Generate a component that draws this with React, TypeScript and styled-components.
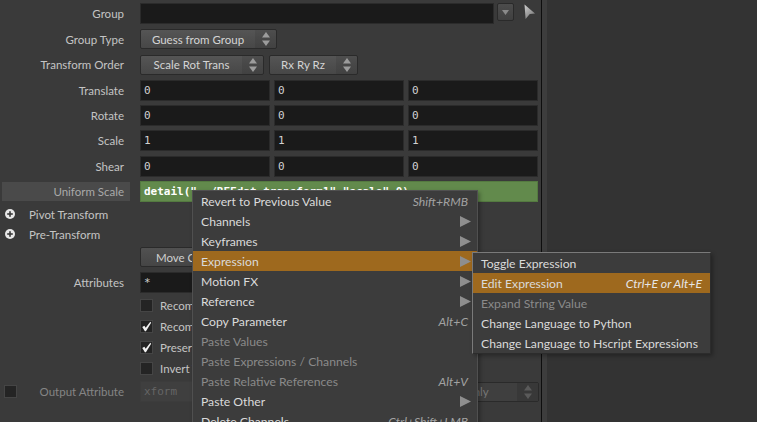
import React from 'react';
import styled, { createGlobalStyle, css } from 'styled-components';

const GlobalStyle = createGlobalStyle`
  html, body {
    margin: 0;
    padding: 0;
    background: #333333;
  }
  body {
    font-family: Lato, 'Noto Sans', sans-serif;
  }
`;

const Screen = styled.div`
  position: relative;
  width: 757px;
  height: 422px;
  overflow: hidden;
  display: flex;
  background: #333333;
`;

const Panel = styled.div`
  flex: none;
  width: 542px;
  box-sizing: border-box;
  padding: 1.3px 3px 0 0;
  background: #3a3a3a;
  border-right: 1px solid #0e0e0e;
  display: flex;
  flex-direction: column;
`;

const Strip = styled.div`
  flex: none;
  width: 5px;
  background: #3d3d3d;
`;

const Rest = styled.div`
  flex: 1;
  background: #333333;
`;

const Row = styled.div<{ $h?: number }>`
  display: grid;
  grid-template-columns: 130px 1fr;
  column-gap: 10px;
  align-items: center;
  height: ${(p) => p.$h ?? 25.4}px;
  flex: none;
`;

const Label = styled.div<{ $hot?: boolean; $off?: boolean }>`
  display: flex;
  align-items: center;
  justify-content: flex-end;
  padding-right: 6px;
  font-size: 11.5px;
  color: ${(p) => (p.$off ? '#858585' : '#c4c4c4')};
  white-space: nowrap;
  ${(p) =>
    p.$hot &&
    css`
      margin-left: 2px;
      height: 19px;
      background: #4a4a4a;
      color: #a9a9a9;
    `}
`;

const Field = styled.div<{ $off?: boolean }>`
  height: 21px;
  box-sizing: border-box;
  display: flex;
  align-items: center;
  padding-left: 3px;
  background: ${(p) => (p.$off ? '#3f3f3f' : '#1a1a1a')};
  border: 1px solid ${(p) => (p.$off ? '#3c3c3c' : '#2b2b2b')};
  font-family: 'DejaVu Sans Mono', monospace;
  font-size: 11px;
  color: ${(p) => (p.$off ? '#666666' : '#d2d2d2')};
  overflow: hidden;
  white-space: nowrap;
`;

const ExprField = styled(Field)`
  background: #628a4c;
  border-color: #547a40;
  color: #ffffff;
  font-weight: bold;
`;

const Vector = styled.div`
  display: grid;
  grid-template-columns: repeat(3, 1fr);
  gap: 4px;
`;

const Line = styled.div`
  display: flex;
  align-items: center;
  gap: 5px;
`;

const Menu = styled.div<{ $w: number; $off?: boolean }>`
  width: ${(p) => p.$w}px;
  height: 20px;
  box-sizing: border-box;
  display: flex;
  border: 1px solid #2a2a2a;
  border-radius: 2px;
  background: ${(p) => (p.$off ? '#3f3f3f' : 'linear-gradient(#555555, #474747)')};
  color: ${(p) => (p.$off ? '#777777' : '#d4d4d4')};
  font-size: 11.5px;
  overflow: hidden;
`;

const MenuText = styled.div`
  flex: 1;
  display: flex;
  align-items: center;
  justify-content: center;
  white-space: nowrap;
`;

const Spin = styled.div<{ $off?: boolean }>`
  width: 21px;
  display: flex;
  align-items: center;
  justify-content: center;
  background: ${(p) => (p.$off ? '#383838' : 'rgba(0,0,0,0.08)')};
`;

const DropBtn = styled.div`
  width: 17px;
  height: 18px;
  margin-left: 3px;
  margin-top: -3px;
  box-sizing: border-box;
  display: flex;
  align-items: center;
  justify-content: center;
  border: 1px solid #2a2a2a;
  border-radius: 2px;
  background: linear-gradient(#4c4c4c, #404040);
`;

const Button = styled.div<{ $w: number }>`
  width: ${(p) => p.$w}px;
  height: 20px;
  box-sizing: border-box;
  display: flex;
  align-items: center;
  justify-content: center;
  border: 1px solid #2a2a2a;
  border-radius: 2px;
  background: linear-gradient(#515151, #454545);
  color: #d0d0d0;
  font-size: 11.5px;
  white-space: nowrap;
`;

const Folder = styled.div`
  height: 20px;
  flex: none;
  display: flex;
  align-items: center;
  gap: 14px;
  padding-left: 5px;
  font-size: 11.5px;
  color: #c4c4c4;
`;

const Toggle = styled.div`
  height: 21px;
  flex: none;
  display: flex;
  align-items: center;
  gap: 7px;
  padding-left: 140px;
  font-size: 11.5px;
  color: #c4c4c4;
  white-space: nowrap;
`;

const Box = styled.div<{ $lead?: boolean }>`
  width: 13px;
  height: 13px;
  box-sizing: border-box;
  flex: none;
  display: flex;
  align-items: center;
  justify-content: center;
  background: #242424;
  border: 1px solid #454545;
  ${(p) =>
    p.$lead &&
    css`
      margin-left: 4px;
      margin-right: auto;
    `}
`;

const PopMenu = styled.div<{ $x: number; $y: number; $w: number; $sub?: boolean }>`
  position: absolute;
  left: ${(p) => p.$x}px;
  top: ${(p) => p.$y}px;
  width: ${(p) => p.$w}px;
  box-sizing: border-box;
  background: #3c3c3c;
  border: 1px solid #505050;
  ${(p) =>
    p.$sub &&
    css`
      border-color: #7a7a7a #2c2c2c #2c2c2c #7a7a7a;
    `}
  box-shadow: 2px 2px 4px rgba(0, 0, 0, 0.3);
`;

const Item = styled.div<{ $on?: boolean; $off?: boolean }>`
  height: 20px;
  display: flex;
  align-items: center;
  justify-content: space-between;
  padding: 0 6px 0 8px;
  font-size: 12.2px;
  white-space: nowrap;
  color: ${(p) => (p.$off ? '#8a8a8a' : '#dadada')};
  background: ${(p) => (p.$on ? '#9e691e' : 'transparent')};
`;

const Keys = styled.span`
  font-style: italic;
  font-size: 12.2px;
  color: #a2a2a2;
  padding-right: 3px;
`;

const HotKeys = styled(Keys)`
  color: #e6e6e6;
  padding-right: 2px;
`;

const Arrow = () => (
  <svg width="11" height="11" viewBox="0 0 11 11">
    <polygon points="0,0 11,5.5 0,11" fill="#8e8e8e" />
  </svg>
);

const Updown = ({ off }: { off?: boolean }) => (
  <svg width="8" height="14" viewBox="0 0 8 14">
    <polygon points="4,0 8,5.5 0,5.5" fill={off ? '#5a5a5a' : '#9c9c9c'} />
    <polygon points="0,8.5 8,8.5 4,14" fill={off ? '#5a5a5a' : '#9c9c9c'} />
  </svg>
);

const Plus = () => (
  <svg width="10" height="10" viewBox="0 0 10 10">
    <circle cx="5" cy="5" r="5" fill="#e8e8e8" />
    <rect x="2.2" y="4.2" width="5.6" height="1.6" fill="#3a3a3a" />
    <rect x="4.2" y="2.2" width="1.6" height="5.6" fill="#3a3a3a" />
  </svg>
);

const Check = () => (
  <svg width="13" height="13" viewBox="0 0 13 13">
    <path d="M1.5 7 L4 5.5 L5.5 8 L11 1 L12 2 L5.8 12 L4.6 12 Z" fill="#f2f2f2" />
  </svg>
);

const Pointer = () => (
  <svg width="13" height="17" viewBox="0 0 13 17" style={{ marginLeft: 9, marginTop: -2 }}>
    <defs>
      <linearGradient id="pg" x1="0" y1="0" x2="0.6" y2="1">
        <stop offset="0" stopColor="#d0d0d0" />
        <stop offset="1" stopColor="#7c7c7c" />
      </linearGradient>
    </defs>
    <path d="M1.5 0.5 L12 9.5 L6.8 10 L2.6 15 Z" fill="url(#pg)" />
  </svg>
);

const DownTri = () => (
  <svg width="7" height="5" viewBox="0 0 7 5">
    <polygon points="0,0 7,0 3.5,5" fill="#8a8a8a" />
  </svg>
);

const vectors: [string, string][] = [
  ['Translate', '0'],
  ['Rotate', '0'],
  ['Scale', '1'],
  ['Shear', '0'],
];

const toggles: [string, boolean][] = [
  ['Recompute Point Normals', false],
  ['Recompute Affected Normals', true],
  ['Preserve Normal Length', true],
  ['Invert Transformation', false],
];

type Entry = { text: string; keys?: string; sub?: boolean; off?: boolean; on?: boolean };

const mainItems: Entry[] = [
  { text: 'Revert to Previous Value', keys: 'Shift+RMB' },
  { text: 'Channels', sub: true },
  { text: 'Keyframes', sub: true },
  { text: 'Expression', sub: true, on: true },
  { text: 'Motion FX', sub: true },
  { text: 'Reference', sub: true },
  { text: 'Copy Parameter', keys: 'Alt+C' },
  { text: 'Paste Values', off: true },
  { text: 'Paste Expressions / Channels', off: true },
  { text: 'Paste Relative References', keys: 'Alt+V', off: true },
  { text: 'Paste Other', sub: true },
  { text: 'Delete Channels', keys: 'Ctrl+Shift+LMB' },
];

const subItems: Entry[] = [
  { text: 'Toggle Expression' },
  { text: 'Edit Expression', keys: 'Ctrl+E or Alt+E', on: true },
  { text: 'Expand String Value', off: true },
  { text: 'Change Language to Python' },
  { text: 'Change Language to Hscript Expressions' },
];

const renderItem = (e: Entry) => (
  <Item key={e.text} $on={e.on} $off={e.off}>
    <span>{e.text}</span>
    {e.sub && <Arrow />}
    {e.keys && (e.on ? <HotKeys>{e.keys}</HotKeys> : <Keys>{e.keys}</Keys>)}
  </Item>
);

export default function App() {
  return (
    <>
      <GlobalStyle />
      <Screen>
        <Panel>
          <Row>
            <Label>Group</Label>
            <Line style={{ gap: 0 }}>
              <Field style={{ width: 354 }} />
              <DropBtn>
                <DownTri />
              </DropBtn>
              <Pointer />
            </Line>
          </Row>
          <Row>
            <Label>Group Type</Label>
            <Line>
              <Menu $w={137}>
                <MenuText>Guess from Group</MenuText>
                <Spin>
                  <Updown />
                </Spin>
              </Menu>
            </Line>
          </Row>
          <Row>
            <Label>Transform Order</Label>
            <Line>
              <Menu $w={124}>
                <MenuText>Scale Rot Trans</MenuText>
                <Spin>
                  <Updown />
                </Spin>
              </Menu>
              <Menu $w={89}>
                <MenuText>Rx Ry Rz</MenuText>
                <Spin>
                  <Updown />
                </Spin>
              </Menu>
            </Line>
          </Row>
          {vectors.map(([name, v]) => (
            <Row key={name}>
              <Label>{name}</Label>
              <Vector>
                <Field>{v}</Field>
                <Field>{v}</Field>
                <Field>{v}</Field>
              </Vector>
            </Row>
          ))}
          <Row>
            <Label $hot>Uniform Scale</Label>
            <ExprField>detail("../REFdat_transform1","scale",0)</ExprField>
          </Row>
          <Folder>
            <Plus />
            Pivot Transform
          </Folder>
          <Folder>
            <Plus />
            Pre-Transform
          </Folder>
          <Row>
            <span />
            <Button $w={155}>Move Centroid to Origin</Button>
          </Row>
          <Row>
            <Label>Attributes</Label>
            <Field>*</Field>
          </Row>
          {toggles.map(([name, on]) => (
            <Toggle key={name}>
              <Box>{on && <Check />}</Box>
              {name}
            </Toggle>
          ))}
          <Row>
            <Label $off>
              <Box $lead />
              Output Attribute
            </Label>
            <Line>
              <Field $off style={{ width: 256 }}>
                xform
              </Field>
              <Menu $w={138} $off>
                <MenuText>Points Only</MenuText>
                <Spin $off>
                  <Updown off />
                </Spin>
              </Menu>
            </Line>
          </Row>
        </Panel>
        <Strip />
        <Rest />
        <PopMenu $x={192} $y={190} $w={286}>
          {mainItems.map(renderItem)}
        </PopMenu>
        <PopMenu $x={472} $y={252} $w={239} $sub>
          {subItems.map(renderItem)}
        </PopMenu>
      </Screen>
    </>
  );
}
